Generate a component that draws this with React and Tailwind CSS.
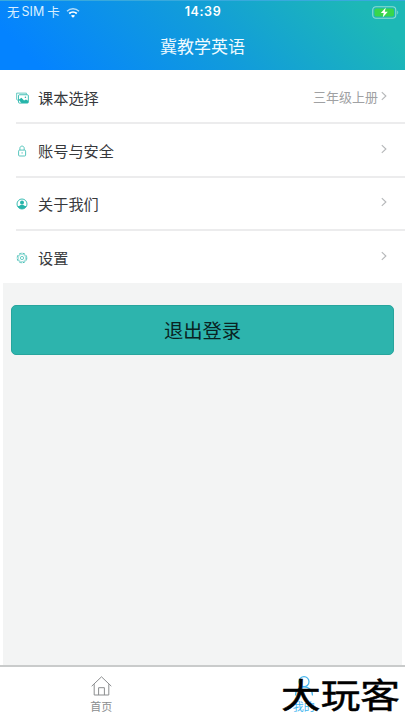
import React from "react";

const teal = "#26b5aa";

function WifiIcon() {
  return (
    <svg width="14" height="11" viewBox="0 0 14 11" fill="none" stroke="#fff">
      <path d="M1 4.2C4.4 1 9.6 1 13 4.2" strokeWidth="1.5" opacity=".7" />
      <path d="M3.2 6.5C5.4 4.6 8.6 4.6 10.8 6.5" strokeWidth="1.8" />
      <path d="M7 10.8L4.9 8.7C6.1 7.7 7.9 7.7 9.1 8.7Z" fill="#fff" stroke="none" />
    </svg>
  );
}

function BatteryIcon() {
  return (
    <svg width="27" height="13" viewBox="0 0 27 13" fill="none">
      <rect x=".75" y=".75" width="23" height="11.5" rx="3.2" stroke="#8fdcd2" strokeWidth="1.1" />
      <rect x="2.5" y="2.4" width="19.5" height="8.2" rx="1.8" fill="#38d64c" />
      <path d="M25.3 4.5C26.5 5.2 26.5 7.8 25.3 8.5Z" fill="#8fdcd2" />
      <path d="M13.8 1.6L8.8 7.1H11.7L10.7 11.4L15.8 5.8H12.8Z" fill="#fff" />
    </svg>
  );
}

function BookIcon() {
  return (
    <svg width="13" height="12" viewBox="0 0 12 11" fill="none" stroke={teal}>
      <path d="M2 7.8L.6 6.9V1H9.6V2.2" strokeWidth=".8" opacity=".8" />
      <rect x="2.3" y="2.5" width="9.1" height="7.7" rx=".9" strokeWidth=".8" />
      <path d="M2.5 7L5 5.2L7.4 7.8L9.2 6.8L11.2 8V10H5Z" fill={teal} stroke="none" />
      <circle cx="8.7" cy="4.8" r=".7" fill={teal} stroke="none" />
    </svg>
  );
}

function LockIcon() {
  return (
    <svg width="12" height="12" viewBox="0 0 12 12" fill="none" stroke={teal} strokeWidth=".9" opacity=".85">
      <rect x="2.6" y="5.1" width="7" height="5.9" rx="1" />
      <path d="M3.9 5V3.2C3.9.4 8.2.4 8.2 3.2V5M6.1 7.2V8.6" />
    </svg>
  );
}

function UserIcon() {
  return (
    <svg width="12" height="12" viewBox="0 0 12 12" fill="none">
      <circle cx="6" cy="6" r="5" stroke={teal} strokeWidth=".9" />
      <circle cx="6" cy="4.6" r="2" fill={teal} />
      <path d="M1.6 8.2C3.2 8.2 4.2 7.6 4.8 6.8H7.2C7.8 7.6 8.8 8.2 10.4 8.2C8.8 11.9 3.2 11.9 1.6 8.2Z" fill={teal} />
    </svg>
  );
}

function SettingsIcon() {
  return (
    <svg width="12" height="12" viewBox="0 0 12 12" fill="none" stroke={teal} opacity=".85">
      <circle cx="6" cy="6" r="4.8" strokeWidth="1" strokeDasharray="2.8 .97" />
      <circle cx="6" cy="6" r="3.8" strokeWidth=".5" />
      <circle cx="6" cy="6" r="1.6" strokeWidth=".8" />
    </svg>
  );
}

function Chevron() {
  return (
    <svg width="6" height="10" viewBox="0 0 6 10" fill="none" stroke="#b5b7b9" strokeWidth="1.1">
      <path d="M.8 1.2L4.9 5L.8 8.8" />
    </svg>
  );
}

function Row({ icon, label, value, last }) {
  return (
    <div className="pl-4">
      <div className={"flex h-[53.4px] items-center border-b-2 pr-[18px] " + (last ? "border-transparent" : "border-[#ececed]")}>
        <span className="flex w-[22px] shrink-0 pt-0.5">{icon}</span>
        <span className="text-[15.2px] leading-5 text-[#37393c]">{label}</span>
        <span className="ml-auto mr-[3px] text-[13px] leading-5 text-[#a0a1a3]">{value}</span>
        <span className="-mt-0.5"><Chevron /></span>
      </div>
    </div>
  );
}

export default function App() {
  return (
    <div className="flex h-[720px] w-[405px] flex-col overflow-hidden bg-white font-['Noto_Sans_CJK_SC',sans-serif]">
      <header className="h-[70px] shrink-0 border-t border-[#38a9dd] bg-[linear-gradient(45deg,#0483ff_9%,#119bdc_50%,#1db8b6_90%)] text-white">
        <div className="grid h-[22px] grid-cols-3 items-center pl-[7px] pr-[6px]">
          <div className="flex items-center text-[12.5px] leading-4 text-[#d8efff]">
            <span>无</span>
            <span className="ml-[2px] mr-[3px] font-['Inter',sans-serif] text-[12.5px]">SIM</span>
            <span className="mr-[6px]">卡</span>
            <WifiIcon />
          </div>
          <div className="text-center font-['Inter',sans-serif] text-[12.5px] font-semibold leading-4 tracking-[0.6px]">14:39</div>
          <div className="flex justify-end"><BatteryIcon /></div>
        </div>
        <h1 className="pt-[11px] text-center text-[17px] font-normal leading-6 text-[#effaff]">冀教学英语</h1>
      </header>

      <main className="flex min-h-0 flex-1 flex-col">
        <section className="h-[213px] shrink-0 bg-white pt-px">
          <Row icon={<BookIcon />} label="课本选择" value="三年级上册" />
          <Row icon={<LockIcon />} label="账号与安全" />
          <Row icon={<UserIcon />} label="关于我们" />
          <Row icon={<SettingsIcon />} label="设置" last />
        </section>
        <section className="mx-[3px] flex-1 bg-[#f3f4f4] px-2 pt-[22px]">
          <button className="block h-[50px] w-full rounded-[5px] border border-[#27a59d] bg-[#2db4ad] text-[19.3px] leading-6 text-[#092322]">退出登录</button>
        </section>
      </main>

      <nav className="relative grid h-[55px] shrink-0 grid-cols-2 border-t-2 border-[#c9cbcb] bg-white">
        <div className="flex flex-col items-center pt-[8px] text-[#8b8d8f]">
          <svg width="21" height="22" viewBox="0 0 21 22" fill="none" stroke="currentColor" strokeWidth="1">
            <path d="M.7 11.2L10.5 1.8L20.3 11.2M3.2 9.2V20H17.8V9.2M7.6 20V12.7H13.4V20" />
          </svg>
          <span className="mt-px text-[11px] leading-4">首页</span>
        </div>
        <div className="flex flex-col items-center pt-[8px] text-[#43b5ef]">
          <svg width="20" height="22" viewBox="0 0 20 22" fill="none" stroke="currentColor" strokeWidth="1.2">
            <circle cx="10" cy="6.7" r="5" />
            <path d="M1.5 20.5C1.5 9 18.5 9 18.5 20.5" />
          </svg>
          <span className="mt-px text-[11px] leading-4">我的</span>
        </div>
        <div className="absolute left-[281px] top-px origin-left scale-x-[1.15] whitespace-nowrap text-[34.5px] font-normal leading-[50px] text-black [-webkit-text-stroke:0.5px_black]">大玩客</div>
      </nav>
    </div>
  );
}
